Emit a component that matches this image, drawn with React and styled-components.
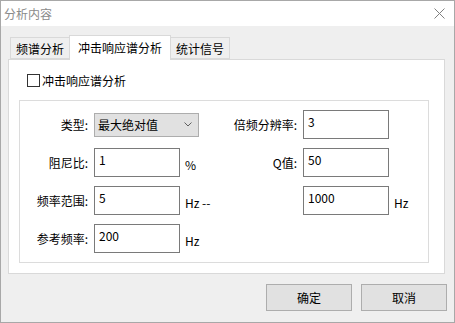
import React from 'react'
import styled, { createGlobalStyle } from 'styled-components'

const GlobalStyle = createGlobalStyle`
  html, body {
    margin: 0;
    padding: 0;
    background: #ffffff;
  }
  * {
    box-sizing: border-box;
  }
`

const FONT = `"Noto Sans CJK SC", "Noto Sans", "Liberation Sans", sans-serif`

const Window = styled.div`
  width: 455px;
  height: 323px;
  border: 1px solid #a8a8a8;
  background: #efefef;
  font-family: ${FONT};
  font-size: 12px;
  color: #000;
  display: flex;
  flex-direction: column;
  overflow: hidden;
`

const TitleBar = styled.div`
  height: 25px;
  background: #ffffff;
  display: flex;
  align-items: center;
  justify-content: space-between;
  padding: 0 9px 0 3px;
  color: #8a8a8a;
  font-size: 12px;
`

const CloseIcon = () => (
  <svg width="11" height="11" viewBox="0 0 11 11">
    <path d="M0.5 0.5 L10.5 10.5 M10.5 0.5 L0.5 10.5" stroke="#808080" strokeWidth="1" fill="none" />
  </svg>
)

const Body = styled.div`
  flex: 1;
  padding: 9px 7px 0 7px;
  display: flex;
  flex-direction: column;
`

const TabStrip = styled.div`
  display: flex;
  align-items: flex-end;
  height: 24px;
  padding-left: 2px;
  position: relative;
  z-index: 1;
`

const Tab = styled.div`
  height: ${({ active }) => (active ? '25px' : '22px')};
  margin-bottom: ${({ active }) => (active ? '-1px' : '0')};
  padding: ${({ active }) => (active ? '0 8px 2px' : '0 5px')};
  margin-left: ${({ first }) => (first ? '0' : '-1px')};
  border: 1px solid #d9d9d9;
  border-bottom: ${({ active }) => (active ? 'none' : '1px solid #d9d9d9')};
  background: ${({ active }) => (active ? '#ffffff' : '#efefef')};
  display: flex;
  align-items: center;
  white-space: nowrap;
  position: relative;
  z-index: ${({ active }) => (active ? 2 : 1)};
`

const Panel = styled.div`
  width: 437px;
  height: 215px;
  background: #ffffff;
  border: 1px solid #d9d9d9;
  padding: 14px 15px 10px 10px;
  display: flex;
  flex-direction: column;
`

const CheckRow = styled.label`
  display: flex;
  align-items: center;
  height: 13px;
  margin: 0 0 13px 8px;
  gap: 2px;
`

const CheckBox = styled.span`
  width: 13px;
  height: 13px;
  border: 1px solid #333333;
  background: #ffffff;
  flex: none;
`

const GroupBox = styled.div`
  border: 1px solid #dcdcdc;
  padding: 9px 0;
  display: grid;
  grid-template-columns: 74px 86px 37px 86px 86px 39px;
  grid-auto-rows: 29px;
  row-gap: 9px;
  align-items: center;
`

const Label = styled.div`
  text-align: right;
  padding-right: 6px;
  white-space: nowrap;
  grid-column: ${({ col }) => col};
`

const Field = styled.div`
  grid-column: ${({ col }) => col};
  height: 29px;
  border: 1px solid #7a7a7a;
  background: #ffffff;
  padding: 3px 4px;
  line-height: 16px;
  align-self: stretch;
`

const Unit = styled.div`
  grid-column: ${({ col }) => col};
  padding: 3px 0 0 5px;
  white-space: nowrap;
`

const Combo = styled.div`
  grid-column: 2 / span 2;
  width: 105px;
  height: 24px;
  background: #e1e1e1;
  border: 1px solid #adadad;
  display: flex;
  align-items: center;
  justify-content: space-between;
  padding: 0 6px 0 3px;
`

const Chevron = () => (
  <svg width="8" height="5" viewBox="0 0 8 5">
    <path d="M0.5 0.5 L4 4 L7.5 0.5" stroke="#606060" strokeWidth="1" fill="none" />
  </svg>
)

const Footer = styled.div`
  display: flex;
  justify-content: flex-end;
  gap: 9px;
  margin-top: 10px;
`

const Button = styled.button`
  width: 86px;
  height: 27px;
  background: #e1e1e1;
  border: 1px solid #adadad;
  font-family: ${FONT};
  font-size: 12px;
  color: #000;
  padding: 0;
`

const rows = [
  { left: '阻尼比:', value: '1', unit: '%', rightLabel: 'Q值:', rightValue: '50' },
  { left: '频率范围:', value: '5', unit: 'Hz --', rightLabel: '', rightValue: '1000', rightUnit: 'Hz' },
  { left: '参考频率:', value: '200', unit: 'Hz' },
]

export default function App() {
  return (
    <>
      <GlobalStyle />
      <Window>
        <TitleBar>
          <span>分析内容</span>
          <CloseIcon />
        </TitleBar>
        <Body>
          <TabStrip>
            <Tab first>频谱分析</Tab>
            <Tab active>冲击响应谱分析</Tab>
            <Tab>统计信号</Tab>
          </TabStrip>
          <Panel>
            <CheckRow>
              <CheckBox />
              <span>冲击响应谱分析</span>
            </CheckRow>
            <GroupBox>
              <Label col={1}>类型:</Label>
              <Combo>
                <span>最大绝对值</span>
                <Chevron />
              </Combo>
              <Label col={4}>倍频分辨率:</Label>
              <Field col={5}>3</Field>

              {rows.map(row => (
                <React.Fragment key={row.left}>
                  <Label col={1}>{row.left}</Label>
                  <Field col={2}>{row.value}</Field>
                  <Unit col={3}>{row.unit}</Unit>
                  {row.rightValue && (
                    <>
                      <Label col={4}>{row.rightLabel}</Label>
                      <Field col={5}>{row.rightValue}</Field>
                      {row.rightUnit && <Unit col={6}>{row.rightUnit}</Unit>}
                    </>
                  )}
                </React.Fragment>
              ))}
            </GroupBox>
          </Panel>
          <Footer>
            <Button>确定</Button>
            <Button>取消</Button>
          </Footer>
        </Body>
      </Window>
    </>
  )
}
